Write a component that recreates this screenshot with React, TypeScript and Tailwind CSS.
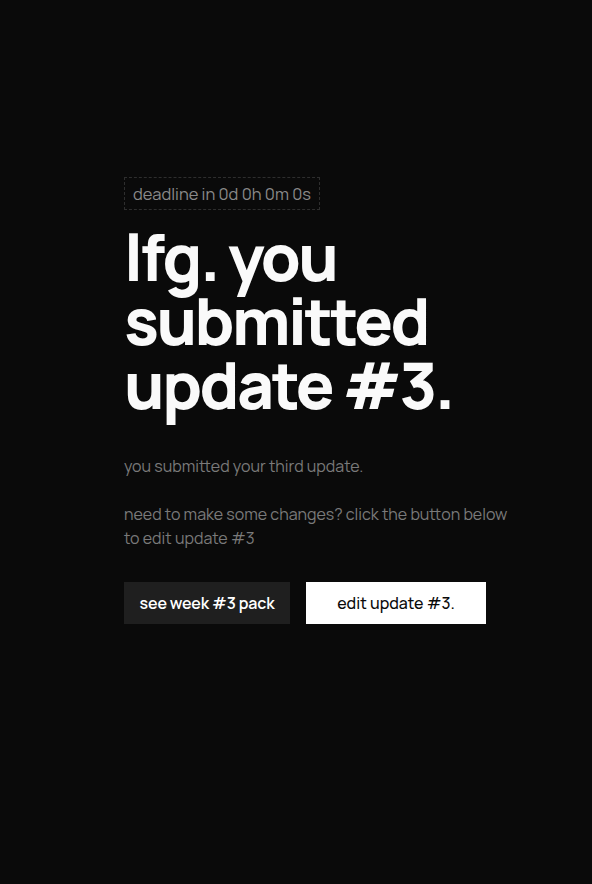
import React from 'react';

const font = { fontFamily: 'Manrope, Inter, "Noto Sans", sans-serif' };

export default function App() {
  return (
    <div className="min-h-[884px] w-full bg-[#0a0a0a] text-white" style={font}>
      <div className="pl-[124px] pr-[84px] pt-[177px]">
        <div className="inline-block border border-dashed border-[#2e2e2e] px-2 py-[5px] text-[16.5px] leading-[21px] text-[#8a8a8a]">
          deadline in 0d 0h 0m 0s
        </div>
        <h1 className="mt-[15px] text-[64px] font-extrabold leading-[64px] tracking-[-0.04em] text-[#fafafa]">
          lfg. you
          <br />
          submitted
          <br />
          update #3.
        </h1>
        <div className="mt-[37px] space-y-6 text-[16px] leading-6 text-[#7a7a7a]">
          <p>you submitted your third update.</p>
          <p>need to make some changes? click the button below to edit update #3</p>
        </div>
        <div className="mt-[32px] flex gap-4">
          <button className="h-[42px] w-[166px] bg-[#1f1f1f] text-[16px] font-semibold tracking-[-0.01em] text-white">
            see week #3 pack
          </button>
          <button className="h-[42px] w-[180px] bg-white text-[16px] font-medium text-[#0a0a0a]">
            edit update #3.
          </button>
        </div>
      </div>
    </div>
  );
}
